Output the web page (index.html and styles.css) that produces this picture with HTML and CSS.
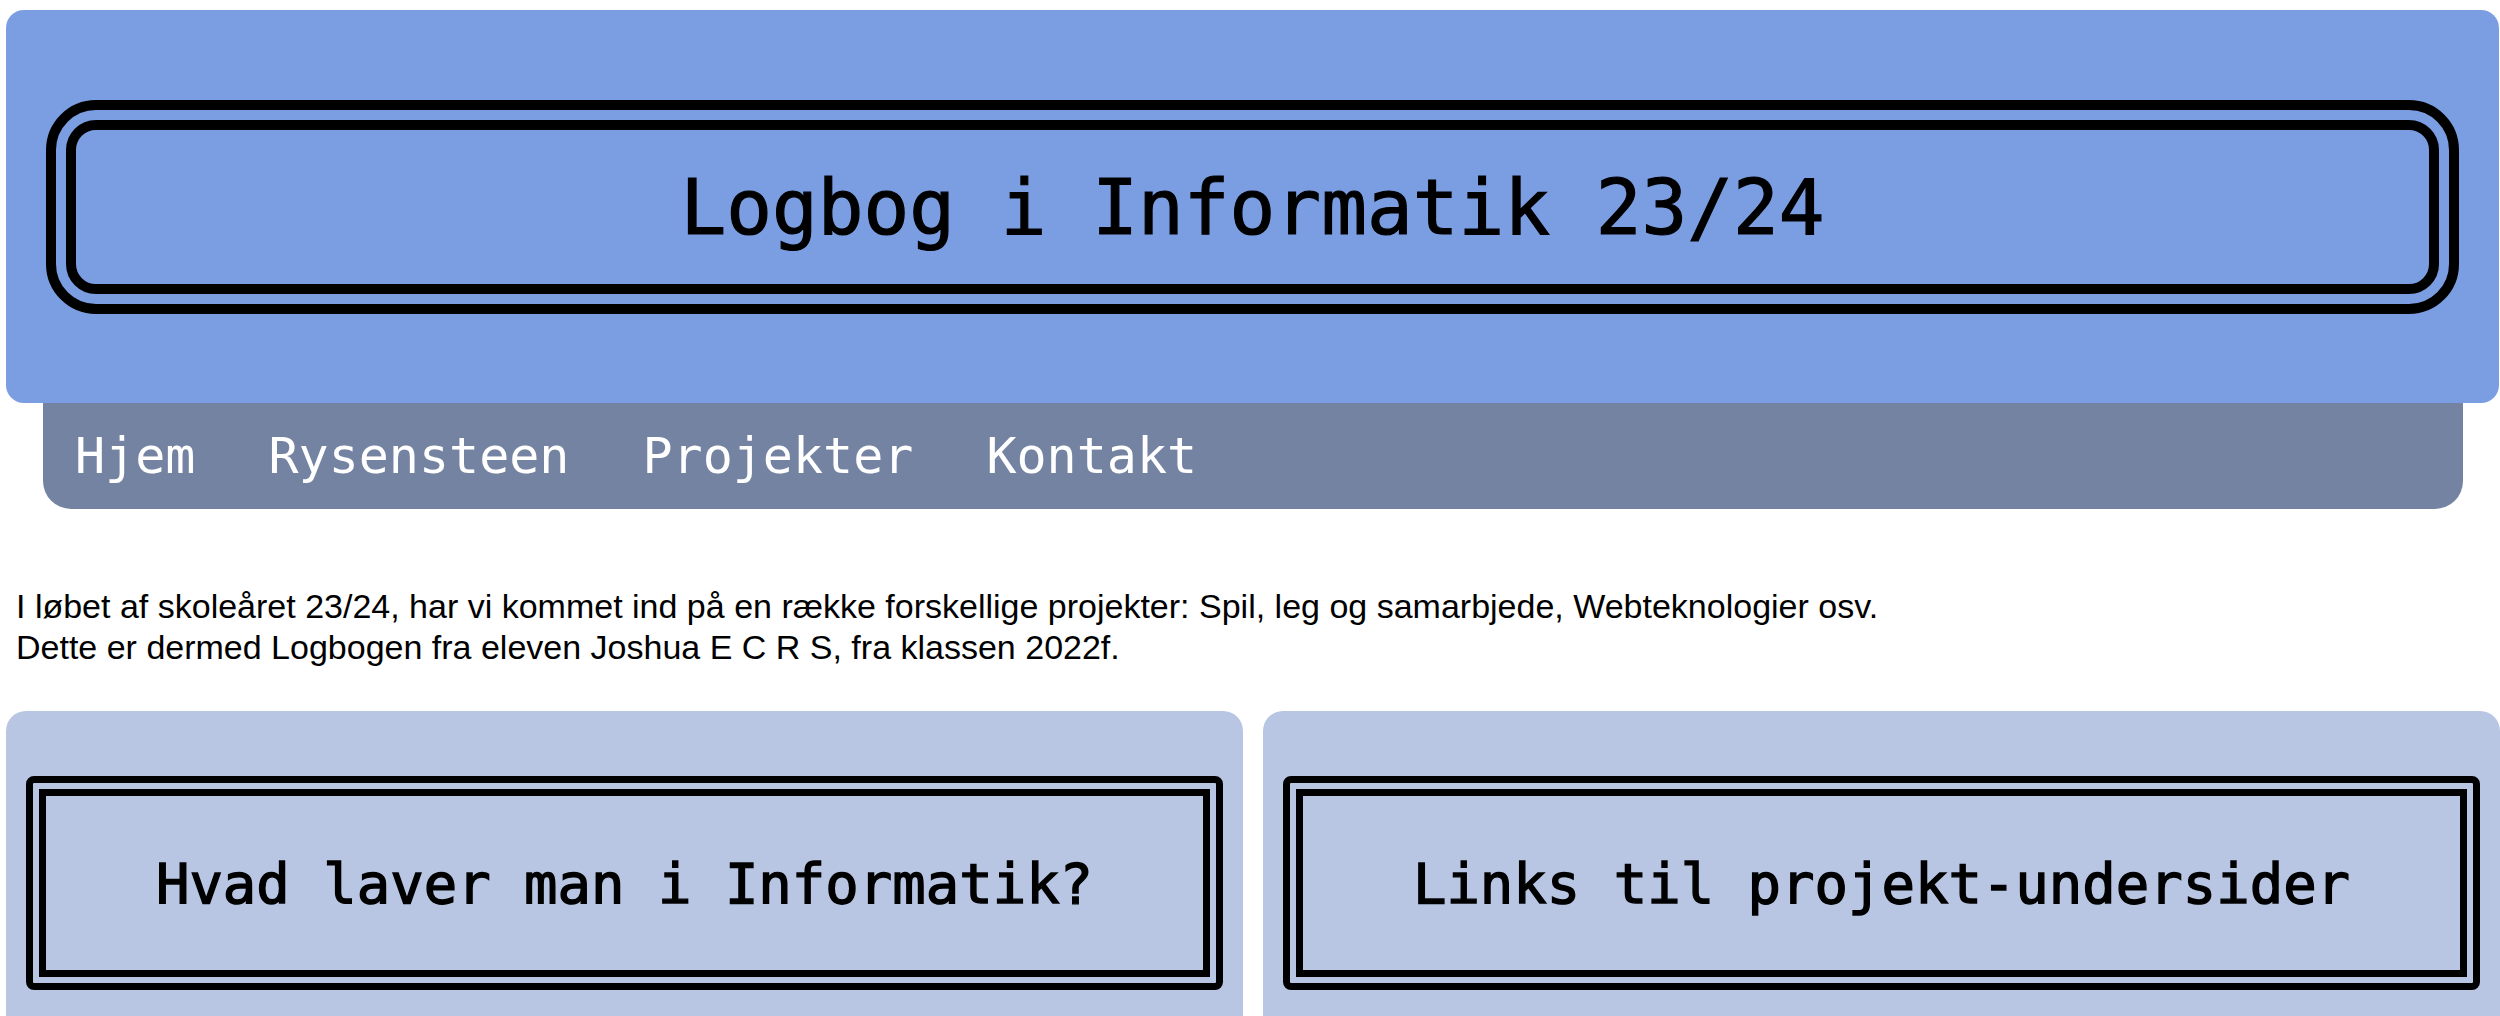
FILE: index.html
```html
<!DOCTYPE html>
<html lang="da">
<head>
<meta charset="utf-8">
<title>Logbog i Informatik 23/24</title>
<link rel="stylesheet" href="styles.css">
</head>
<body>
<div class="page">
  <header class="hero">
    <div class="title-box">
      <h1 class="title">Logbog i Informatik 23/24</h1>
    </div>
  </header>
  <nav class="menu">
    <a href="#">Hjem</a>
    <a href="#">Rysensteen</a>
    <a href="#">Projekter</a>
    <a href="#">Kontakt</a>
  </nav>
  <p class="intro">I løbet af skoleåret 23/24, har vi kommet ind på en række forskellige projekter: Spil, leg og samarbjede, Webteknologier osv.<br>Dette er dermed Logbogen fra eleven Joshua E C R S, fra klassen 2022f.</p>
  <div class="cards">
    <section class="card">
      <div class="card-box"><h2 class="card-title">Hvad laver man i Informatik?</h2></div>
    </section>
    <section class="card">
      <div class="card-box"><h2 class="card-title">Links til projekt-undersider</h2></div>
    </section>
  </div>
</div>
</body>
</html>
```

FILE: styles.css
```css
html, body {
  margin: 0;
  padding: 0;
  background: #ffffff;
}
body {
  font-family: "Liberation Sans", Arial, sans-serif;
  overflow: hidden;
}
.page {
  margin-left: 6px;
  width: 2494px;
  padding-top: 10px;
}
.hero {
  background: #7b9de2;
  border-radius: 18px;
  padding: 90px 40px 89px 40px;
  width: 2493px;
  box-sizing: border-box;
}
.title-box {
  border: 30px double #000;
  border-radius: 50px;
  height: 214px;
  box-sizing: border-box;
  display: flex;
  align-items: center;
  justify-content: center;
}
.title {
  margin: 0;
  font-family: "DejaVu Sans Mono", monospace;
  font-weight: normal;
  -webkit-text-stroke: 1.2px #000;
  font-size: 76px;
  color: #000;
}
.menu {
  background: #7483a1;
  margin: 0 37px;
  height: 106px;
  border-radius: 0 0 28px 28px;
  display: flex;
  align-items: center;
  gap: 73px;
  padding-left: 32px;
}
.menu a {
  color: #ffffff;
  text-decoration: none;
  font-family: "DejaVu Sans Mono", monospace;
  font-size: 50px;
}
.intro {
  margin: 77px 0 0 10px;
  font-size: 34px;
  line-height: 41px;
  color: #000;
}
.cards {
  display: flex;
  gap: 20px;
  margin-top: 43px;
}
.card {
  flex: 1;
  background: #b8c6e4;
  border-radius: 20px;
  padding: 65px 20px 65px 20px;
}
.card-box {
  border: 20px double #000;
  border-radius: 8px;
  height: 214px;
  box-sizing: border-box;
  display: flex;
  align-items: center;
  justify-content: center;
}
.card-title {
  margin: 0;
  font-family: "DejaVu Sans Mono", monospace;
  font-weight: normal;
  -webkit-text-stroke: 1.4px #000;
  font-size: 55.6px;
  color: #000;
}
```
